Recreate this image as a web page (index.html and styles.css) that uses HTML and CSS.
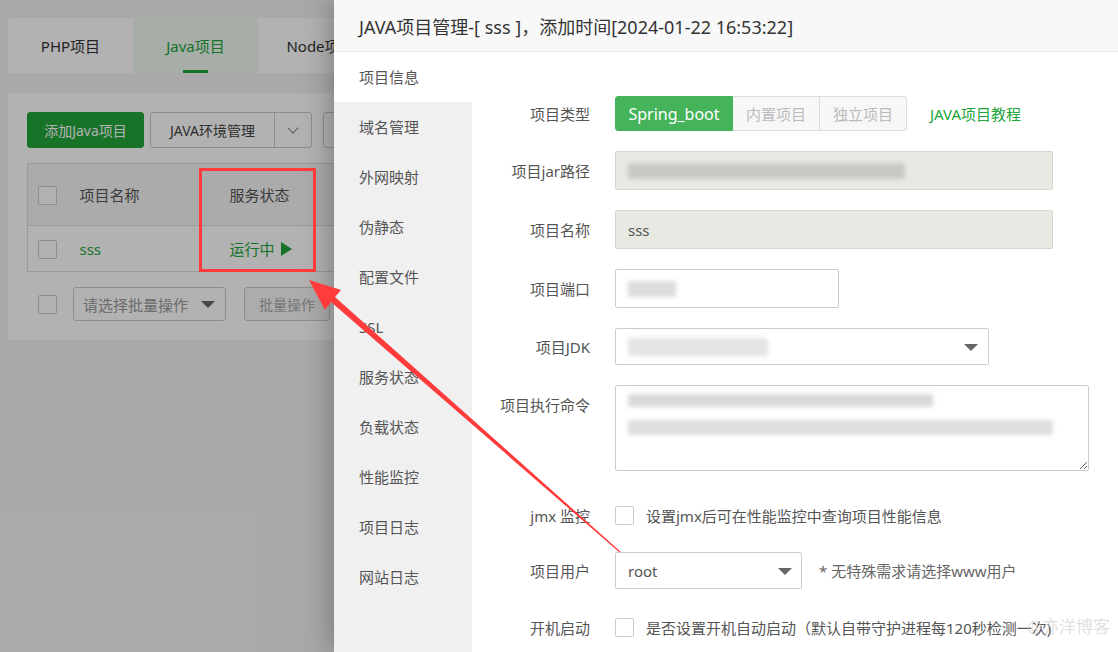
FILE: index.html
```html
<!DOCTYPE html>
<html lang="zh-CN">
<head>
  <meta charset="UTF-8" />
  <meta name="viewport" content="width=device-width, initial-scale=1.0" />
  <title>JAVA项目管理</title>
  <link rel="stylesheet" href="styles.css">
</head>
<body>
  <div class="page">
    <div class="card tabs">
      <div class="tab">PHP项目</div>
      <div class="tab active">Java项目</div>
      <div class="tab">Node项目</div>
    </div>

    <div class="card main">
      <div class="toolbar">
        <button class="btn btn-green">添加Java项目</button>
        <div class="split">
          <span class="split-text">JAVA环境管理</span>
          <span class="split-drop"><i class="chev"></i></span>
        </div>
        <button class="btn btn-plain"></button>
      </div>

      <table class="list">
        <thead>
          <tr>
            <th class="c-check"><span class="box"></span></th>
            <th class="c-name">项目名称</th>
            <th class="c-state">服务状态</th>
            <th></th>
          </tr>
        </thead>
        <tbody>
          <tr>
            <td class="c-check"><span class="box"></span></td>
            <td class="c-name green">sss</td>
            <td class="c-state green">运行中 <i class="play"></i></td>
            <td></td>
          </tr>
        </tbody>
      </table>

      <div class="batch">
        <span class="box"></span>
        <div class="batch-select">请选择批量操作<i class="caret"></i></div>
        <button class="btn btn-muted">批量操作</button>
      </div>
    </div>
  </div>

  <div class="mask"></div>

  <div class="layer">
    <div class="layer-title">JAVA项目管理-[ sss ]，添加时间[2024-01-22 16:53:22]</div>
    <div class="layer-body">
      <ul class="side">
        <li class="on">项目信息</li>
        <li>域名管理</li>
        <li>外网映射</li>
        <li>伪静态</li>
        <li>配置文件</li>
        <li>SSL</li>
        <li>服务状态</li>
        <li>负载状态</li>
        <li>性能监控</li>
        <li>项目日志</li>
        <li>网站日志</li>
      </ul>

      <div class="form">
        <div class="row">
          <label class="lbl">项目类型</label>
          <div class="btn-group">
            <span class="opt sel">Spring_boot</span>
            <span class="opt">内置项目</span>
            <span class="opt">独立项目</span>
          </div>
          <a class="link">JAVA项目教程</a>
        </div>

        <div class="row">
          <label class="lbl">项目jar路径</label>
          <div class="field ro wide"><span class="blur blur-path"></span></div>
        </div>

        <div class="row">
          <label class="lbl">项目名称</label>
          <div class="field ro wide">sss</div>
        </div>

        <div class="row">
          <label class="lbl">项目端口</label>
          <div class="field port"><span class="blur blur-port"></span></div>
        </div>

        <div class="row">
          <label class="lbl">项目JDK</label>
          <div class="field select jdk"><span class="blur blur-jdk"></span><i class="caret"></i></div>
        </div>

        <div class="row">
          <label class="lbl top">项目执行命令</label>
          <div class="field cmd">
            <span class="blur blur-cmd1"></span>
            <span class="blur blur-cmd2"></span>
          </div>
        </div>

        <div class="row jmx">
          <label class="lbl">jmx 监控</label>
          <span class="box"></span>
          <span class="note">设置jmx后可在性能监控中查询项目性能信息</span>
        </div>

        <div class="row">
          <label class="lbl">项目用户</label>
          <div class="field select user">root<i class="caret"></i></div>
          <span class="hint">* 无特殊需求请选择www用户</span>
        </div>

        <div class="row boot">
          <label class="lbl">开机启动</label>
          <span class="box"></span>
          <span class="note">是否设置开机自动启动（默认自带守护进程每120秒检测一次)</span>
        </div>
      </div>
    </div>
    <div class="watermark">@亦洋博客</div>
  </div>

  <svg class="mark" width="1118" height="652" viewBox="0 0 1118 652">
    <rect x="200.5" y="169.5" width="114" height="101" fill="none" stroke="#ff3b3b" stroke-width="3" />
    <polygon fill="#ff3b3b" points="309,280 341,290 335,297 620.4,551.5 619.6,552.5 331,302 325,310" />
  </svg>
</body>
</html>
```

FILE: styles.css
```css
* {
  box-sizing: border-box;
}
html, body {
  margin: 0;
  height: 100%;
  overflow: hidden;
}
body {
  font-family: "Noto Sans", "Noto Sans CJK SC", sans-serif;
  font-size: 15px;
  color: #555;
  background: #f3f3f3;
  position: relative;
}
.page {
  padding: 18px 0 0 8px;
  width: 700px;
}
.card {
  background: #fff;
  border-radius: 4px;
}
.tabs {
  display: flex;
  height: 55px;
  overflow: hidden;
}
.tab {
  width: 125px;
  flex: none;
  display: flex;
  align-items: center;
  justify-content: center;
  color: #333;
  position: relative;
}
.tab.active {
  background: #eff8f0;
  color: #20a53a;
}
.tab.active::after {
  content: "";
  position: absolute;
  bottom: 0;
  left: 50px;
  width: 25px;
  height: 3px;
  background: #20a53a;
}
.main {
  margin-top: 20px;
  height: 247px;
  padding: 19px 19px;
}
.toolbar {
  display: flex;
  gap: 6px;
  height: 36px;
}
.btn {
  font: inherit;
  font-size: 14px;
  height: 36px;
  padding: 0 12px;
  border-radius: 3px;
  border: 1px solid #ccc;
  background: #fff;
  color: #555;
}
.btn-green {
  background: #20a53a;
  border-color: #20a53a;
  color: #fff;
  width: 117px;
}
.btn-plain {
  margin-left: 5px;
  width: 90px;
}
.split {
  display: flex;
  border: 1px solid #ccc;
  border-radius: 3px;
  font-size: 14px;
  color: #444;
}
.split-text {
  width: 124px;
  display: flex;
  align-items: center;
  justify-content: center;
  border-right: 1px solid #ccc;
}
.split-drop {
  width: 36px;
  display: flex;
  align-items: center;
  justify-content: center;
}
.chev {
  width: 8px;
  height: 8px;
  border-right: 1px solid #888;
  border-bottom: 1px solid #888;
  transform: rotate(45deg);
  margin-top: -4px;
}
.list {
  margin-top: 15px;
  border-collapse: collapse;
  width: 700px;
  border: 1px solid #ddd;
  font-size: 15px;
}
.list th {
  height: 62px;
  font-weight: normal;
  text-align: left;
  color: #555;
  background: #f5f5f5;
  border-bottom: 1px solid #ddd;
}
.list td {
  height: 46px;
}
.c-check {
  width: 51px;
  padding-left: 10px;
}
.c-name {
  width: 150px;
}
.c-state {
  width: 140px;
}
.green {
  color: #20a53a;
}
.box {
  display: inline-block;
  width: 19px;
  height: 19px;
  border: 1px solid #ccc;
  border-radius: 2px;
  background: #fff;
  vertical-align: middle;
  flex: none;
}
.play {
  display: inline-block;
  width: 0;
  height: 0;
  border-left: 11px solid #20a53a;
  border-top: 7px solid transparent;
  border-bottom: 7px solid transparent;
  margin-left: 3px;
  vertical-align: -1px;
}
.batch {
  display: flex;
  align-items: center;
  margin-top: 15px;
  padding-left: 11px;
}
.batch-select {
  width: 153px;
  height: 34px;
  margin-left: 16px;
  border: 1px solid #ccc;
  border-radius: 3px;
  display: flex;
  align-items: center;
  padding-left: 9px;
  color: #999;
  position: relative;
}
.caret {
  position: absolute;
  right: 10px;
  top: 50%;
  margin-top: -3px;
  width: 0;
  height: 0;
  border-top: 7px solid #666;
  border-left: 7px solid transparent;
  border-right: 7px solid transparent;
}
.btn-muted {
  margin-left: 18px;
  width: 86px;
  height: 34px;
  color: #aaa;
  background: #f7f7f7;
}
.mask {
  position: absolute;
  inset: 0;
  background: rgba(0, 0, 0, 0.3);
}
.layer {
  position: absolute;
  top: 0;
  right: 0;
  width: 784px;
  height: 652px;
  background: #fff;
  box-shadow: 0 0 30px rgba(0, 0, 0, 0.35);
  display: flex;
  flex-direction: column;
}
.layer-title {
  height: 52px;
  flex: none;
  background: #f8f8f8;
  border-bottom: 1px solid #eee;
  padding-left: 25px;
  display: flex;
  align-items: center;
  font-size: 18px;
  color: #333;
}
.layer-body {
  flex: 1;
  display: flex;
}
.side {
  list-style: none;
  margin: 0;
  padding: 0;
  width: 138px;
  flex: none;
  background: #f0f0f0;
}
.side li {
  height: 50px;
  line-height: 50px;
  padding-left: 25px;
  color: #555;
}
.side li.on {
  background: #fff;
}
.form {
  flex: 1;
  padding-top: 44px;
}
.row {
  display: flex;
  align-items: center;
  min-height: 35px;
  margin-bottom: 20px;
}
.row.jmx {
  margin-top: 25px;
  margin-bottom: 18px;
  min-height: 38px;
}
.row.boot {
  margin-top: 21px;
}
.lbl {
  width: 118px;
  flex: none;
  text-align: right;
  margin-right: 25px;
  color: #555;
}
.lbl.top {
  align-self: flex-start;
  padding-top: 9px;
}
.btn-group {
  display: flex;
  height: 35px;
}
.opt {
  display: flex;
  align-items: center;
  justify-content: center;
  width: 87px;
  border: 1px solid #ddd;
  border-left: none;
  background: #f7f7f7;
  color: #bbb;
}
.opt:last-child {
  border-radius: 0 3px 3px 0;
}
.opt.sel {
  width: 118px;
  background: #45b35a;
  border: 1px solid #45b35a;
  color: #fff;
  font-size: 16px;
  border-radius: 3px 0 0 3px;
}
.link {
  margin-left: 23px;
  color: #20a53a;
}
.field {
  height: 39px;
  border: 1px solid #ccc;
  border-radius: 2px;
  background: #fff;
  display: flex;
  align-items: center;
  padding-left: 12px;
  color: #555;
  position: relative;
}
.field.ro {
  background: #e9e9e3;
  border-color: #d6d6d0;
}
.wide {
  width: 438px;
}
.port {
  width: 224px;
}
.select {
  height: 37px;
}
.jdk {
  width: 374px;
}
.user {
  width: 187px;
}
.user .caret {
  right: 9px;
}
.cmd {
  width: 474px;
  height: 86px;
  display: block;
  padding-top: 8px;
  resize: both;
  overflow: hidden;
}
.blur {
  display: block;
  background: #d0d0cb;
  filter: blur(2px);
  border-radius: 3px;
}
.blur-path {
  width: 277px;
  height: 16px;
  background: #c9c9c3;
}
.blur-port {
  width: 48px;
  height: 16px;
  background: #dcdcdc;
}
.blur-jdk {
  width: 140px;
  height: 18px;
  background: #e4e4e4;
}
.blur-cmd1 {
  width: 305px;
  height: 13px;
  background: #d9d9d9;
}
.blur-cmd2 {
  width: 425px;
  height: 15px;
  margin-top: 13px;
  background: #dedede;
}
.note {
  margin-left: 12px;
  color: #555;
}
.hint {
  margin-left: 17px;
  color: #666;
}
.watermark {
  position: absolute;
  right: 8px;
  bottom: 14px;
  font-size: 17px;
  color: rgba(205, 205, 205, 0.6);
}
.mark {
  position: absolute;
  top: 0;
  left: 0;
  pointer-events: none;
}
```
